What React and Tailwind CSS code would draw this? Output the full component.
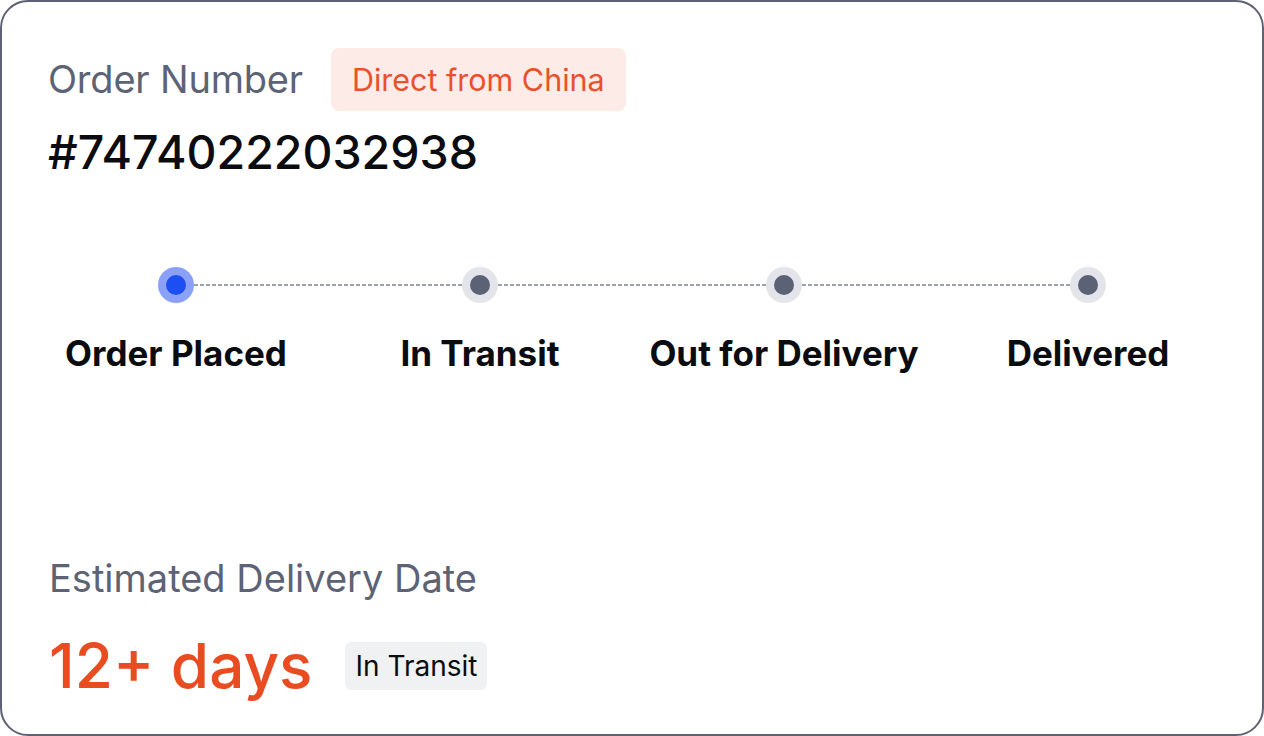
import React from 'react';

const steps = ['Order Placed', 'In Transit', 'Out for Delivery', 'Delivered'];

function Dot({ active }) {
  return (
    <div
      className={
        'w-9 h-9 rounded-full flex items-center justify-center ' +
        (active ? 'bg-[#8aa1f7]' : 'bg-[#e3e5ea]')
      }
    >
      <div className={'w-5 h-5 rounded-full ' + (active ? 'bg-[#1d4ef2]' : 'bg-[#5b6276]')} />
    </div>
  );
}

export default function App() {
  return (
    <div className="w-[1264px] h-[736px] bg-white font-['Inter',sans-serif]">
      <div className="h-full border-2 border-[#5f6175] rounded-[28px] flex flex-col">
        {/* order header */}
        <div className="px-[46px] pt-[46px]">
          <div className="flex items-center gap-7">
            <span className="text-[38px] text-[#5d6375] tracking-[-0.2px]">Order Number</span>
            <span className="h-[63px] px-[21px] rounded-lg bg-[#fdebe7] text-[30.5px] text-[#e9502c] flex items-center">
              Direct from China
            </span>
          </div>
          <div className="mt-[12px] text-[46.5px] leading-[58px] font-medium text-[#0b0c10]">#74740222032938</div>
        </div>

        {/* stepper */}
        <div className="px-[22px] mt-[86px] flex">
          {steps.map((s, i) => (
            <div key={s} className="flex-1 flex flex-col items-center relative">
              {i < steps.length - 1 && (
                <svg className="absolute left-[calc(50%+18px)] top-[17px] w-[calc(100%-36px)] h-[2px]" preserveAspectRatio="none">
                  <line x1="0" y1="1" x2="100%" y2="1" stroke="#3f4454" strokeWidth="1" strokeDasharray="4 2" />
                </svg>
              )}
              <Dot active={i === 0} />
              <div className="mt-[26px] text-[35px] font-bold text-[#0b0c10] leading-[48px]">{s}</div>
            </div>
          ))}
        </div>

        {/* estimate */}
        <div className="mt-auto px-[47px] pb-[36px]">
          <div className="text-[38px] text-[#5d6375] leading-[46px]">Estimated Delivery Date</div>
          <div className="mt-[33px] flex items-center gap-[33px]">
            <span className="text-[62px] leading-[64px] font-medium text-[#ea4c22]">12+ days</span>
            <span className="h-[48px] px-[10px] rounded-md bg-[#f0f1f3] text-[28px] text-[#0b0c10] flex items-center">
              In Transit
            </span>
          </div>
        </div>
      </div>
    </div>
  );
}
